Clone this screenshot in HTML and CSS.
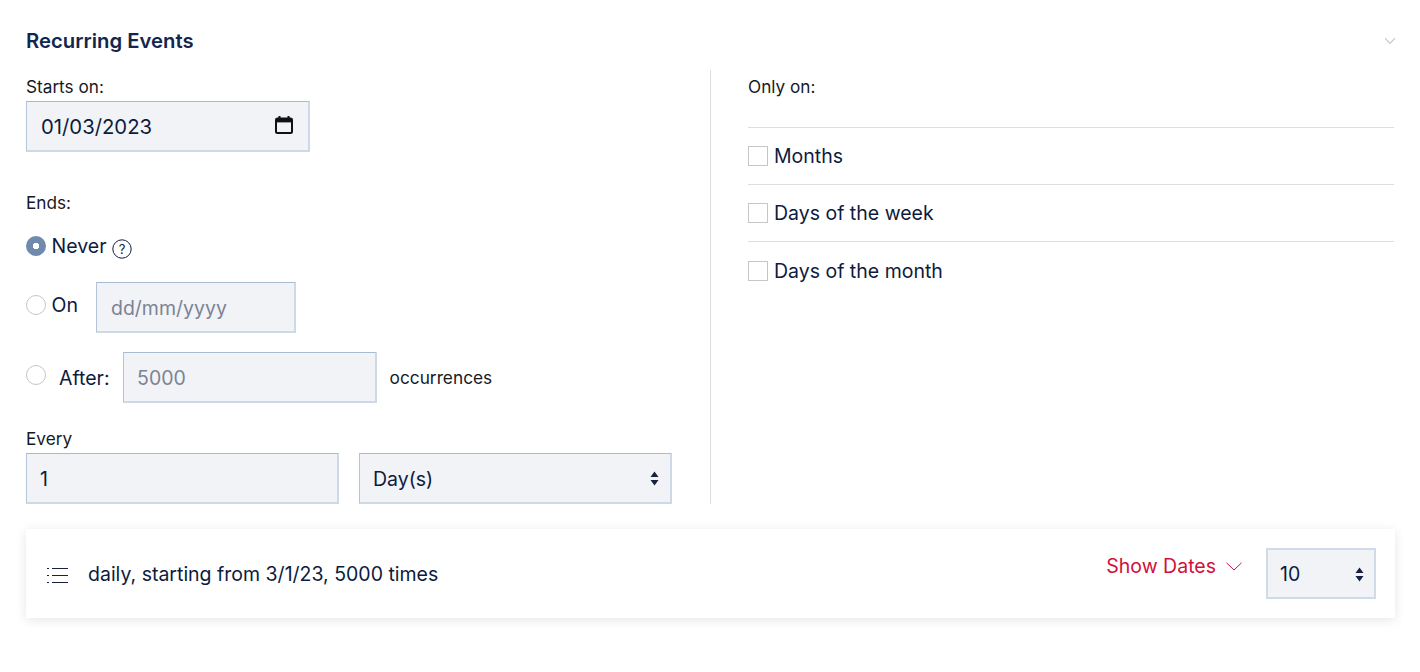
FILE: index.html
```html
<!DOCTYPE html>
<html lang="en">
<head>
<meta charset="utf-8">
<title>Recurring Events</title>
<link rel="stylesheet" href="styles.css">
</head>
<body>
<section class="panel">
  <header class="head">
    <h2 class="title">Recurring Events</h2>
    <svg class="collapse" width="12" height="8" viewBox="0 0 12 8"><path d="M1 1.200 6 6.400 11 1.200" fill="none" stroke="#c3c7ce" stroke-width="1.200"/></svg>
  </header>
  <div class="cols">
    <div class="left">
      <div class="label starts">Starts on:</div>
      <div class="field date-field">
        <span class="date-value">01/03/2023</span>
        <svg class="calendar" width="18" height="18" viewBox="0 0 18 18"><path d="M4.500 0V2.500M13.500 0V2.500" stroke="#111" stroke-width="2"/><rect x="1" y="2.500" width="16" height="14.500" rx="1.500" fill="none" stroke="#111" stroke-width="2"/><rect x="1" y="3" width="16" height="3.400" fill="#111"/></svg>
      </div>
      <div class="label ends">Ends:</div>
      <div class="row never">
        <span class="radio checked"></span>
        <span class="opt">Never</span>
        <svg class="help" width="20" height="20" viewBox="0 0 20 20"><circle cx="10" cy="10" r="9.200" fill="none" stroke="#0d1b3e" stroke-width="1"/><text x="10" y="14.500" text-anchor="middle" class="help-q">?</text></svg>
      </div>
      <div class="row on">
        <span class="radio-group"><span class="radio"></span><span class="opt">On</span></span>
        <div class="field on-field muted">dd/mm/yyyy</div>
      </div>
      <div class="row after">
        <span class="radio raised"></span>
        <span class="opt after-label">After:</span>
        <div class="field after-field muted">5000</div>
        <span class="occ">occurrences</span>
      </div>
      <div class="label every">Every</div>
      <div class="row every-row">
        <div class="field every-field">1</div>
        <div class="field select unit">
          <span>Day(s)</span>
          <svg class="updown" width="9" height="15" viewBox="0 0 9 15"><path d="M4.500 0.500 8.500 6H0.500Z M4.500 14.500 0.500 9H8.500Z" fill="#16233f"/></svg>
        </div>
      </div>
    </div>
    <div class="right">
      <div class="label only">Only on:</div>
      <div class="check first"><span class="box"></span><span class="opt">Months</span></div>
      <div class="check"><span class="box"></span><span class="opt">Days of the week</span></div>
      <div class="check"><span class="box"></span><span class="opt">Days of the month</span></div>
    </div>
  </div>
  <div class="bar">
    <svg class="list" width="22" height="16" viewBox="0 0 22 16"><path d="M1 1.500H3M6 1.500H22M1 8.500H3M6 8.500H22M1 15.500H3M6 15.500H22" stroke="#16233f" stroke-width="1"/></svg>
    <span class="summary">daily, starting from 3/1/23, 5000 times</span>
    <span class="show">Show Dates
      <svg width="16" height="9" viewBox="0 0 16 9"><path d="M0.500 0.800 8 8 15.500 0.800" fill="none" stroke="#d0103a" stroke-width="1"/></svg>
    </span>
    <div class="field select count">
      <span>10</span>
      <svg class="updown" width="9" height="15" viewBox="0 0 9 15"><path d="M4.500 0.500 8.500 6H0.500Z M4.500 14.500 0.500 9H8.500Z" fill="#16233f"/></svg>
    </div>
  </div>
</section>
</body>
</html>
```
FILE: styles.css
```css
* { box-sizing: border-box; }
html, body { margin: 0; padding: 0; background: #fff; }
body { font-family: Inter, "Liberation Sans", sans-serif; color: #0d1b3e; height: 672px; overflow: hidden; }
.panel { padding: 12px 25px 0 26px; }
.head { height: 58px; display: flex; align-items: center; justify-content: space-between; }
.title { margin: 0; font-size: 20.300px; font-weight: 600; line-height: 24px; color: #14264d; }
.collapse { margin-right: -1px; margin-top: -1px; }
.cols { display: flex; height: 434px; }
.left { width: 685px; padding: 7px 38px 0 0; border-right: 1px solid #dcdee2; }
.right { flex: 1; padding: 7px 1px 0 37px; }
.label { font-size: 17.200px; line-height: 20px; color: #16191f; }
.starts { margin-bottom: 4px; }
.ends { margin-top: 41px; }
.every { margin-top: 26px; margin-bottom: 4px; }
.field { height: 51px; background: #f1f3f7; border-style: solid; border-width: 1px 2px 2px 1px; border-color: #a9bbd3 #cdd9e7 #cdd9e7 #b4c4d9; font-size: 19.500px; padding: 1px 13px 0 14px; display: flex; align-items: center; }
.muted { color: #7b8494; }
.date-field { width: 284px; justify-content: space-between; }
.date-value { font-size: 20.300px; }
.calendar { margin-right: 2px; margin-top: -3px; }
.row { display: flex; align-items: center; }
.never { height: 30px; margin-top: 18px; }
.on { margin-top: 21px; }
.after { margin-top: 19px; }
.radio { width: 20px; height: 20px; border-radius: 50%; border: 1px solid #c4c6ca; background: #fff; flex: none; display: inline-block; }
.radio.checked { background: radial-gradient(circle, #fff 0 3px, #6f8aad 3.500px); border: none; }
.radio.raised { margin-bottom: 5px; }
.radio-group { display: flex; align-items: center; margin-bottom: 5px; }
.opt { font-size: 19.500px; line-height: 24px; margin-left: 5.500px; }
.help { margin-left: 6px; margin-top: 5px; }
.help-q { font-size: 13px; font-family: Inter, sans-serif; fill: #0d1b3e; }
.on-field { width: 200px; margin-left: 18px; }
.after-label { margin-left: 13px; margin-top: 1px; }
.after-field { width: 254px; margin-left: 13.500px; padding-left: 13px; }
.occ { font-size: 17.300px; margin-left: 12.500px; color: #16191f; }
.every-field { width: 313px; padding-left: 13px; }
.unit { width: 313px; margin-left: 20px; padding-left: 13px; }
.select { justify-content: space-between; padding-right: 11px; }
.check { height: 57px; border-top: 1px solid #dcdee2; display: flex; align-items: center; }
.check.first { margin-top: 30px; }
.check:last-child { padding-top: 1px; }
.check .opt { margin-left: 6px; }
.only { height: 20px; }
.box { width: 20px; height: 20px; border: 1px solid #c4c6ca; background: #fff; flex: none; }
.bar { height: 89px; margin-top: 25px; display: flex; align-items: center; background: #fff; box-shadow: 0 2px 10px rgba(30, 40, 60, .11); padding: 0 19px 0 20px; }
.list { flex: none; margin-top: 3px; }
.summary { font-size: 19.500px; margin-left: 20px; }
.show { margin-left: auto; color: #d0103a; font-size: 19.500px; display: flex; align-items: center; gap: 10px; margin-bottom: 15px; }
.count { width: 110px; margin-left: 24px; padding: 1px 10px 0 12px; border-width: 2px; border-color: #cfdbe9; }
```
